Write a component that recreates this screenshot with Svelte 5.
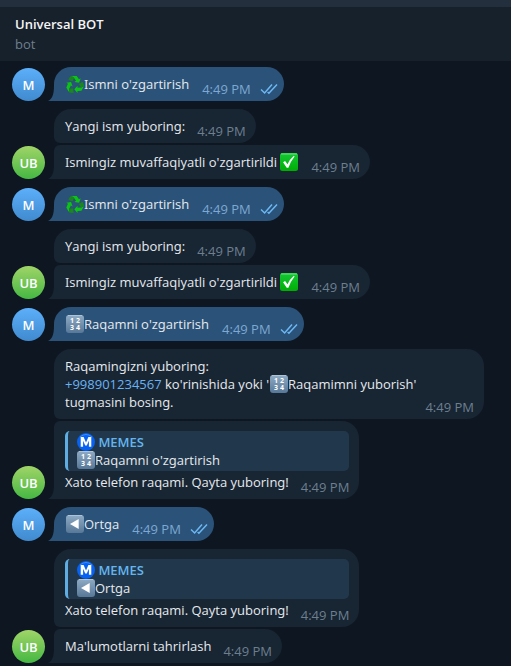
<script>
  const groups = [
    { own: true, messages: [{ parts: [{ icon: 'recycle' }, "Ismni o'zgartirish"] }] },
    {
      own: false,
      messages: [
        { parts: ['Yangi ism yuboring:'] },
        { parts: ["Ismingiz muvaffaqiyatli o'zgartirildi ", { icon: 'check' }] }
      ]
    },
    { own: true, messages: [{ parts: [{ icon: 'recycle' }, "Ismni o'zgartirish"] }] },
    {
      own: false,
      messages: [
        { parts: ['Yangi ism yuboring:'] },
        { parts: ["Ismingiz muvaffaqiyatli o'zgartirildi ", { icon: 'check' }] }
      ]
    },
    { own: true, messages: [{ parts: [{ icon: 'numbers' }, "Raqamni o'zgartirish"] }] },
    {
      own: false,
      messages: [
        {
          parts: [
            'Raqamingizni yuboring:',
            { br: true },
            { link: '+998901234567' },
            " ko'rinishida yoki '",
            { icon: 'numbers' },
            "Raqamimni yuborish' ",
            'tugmasini bosing.'
          ]
        },
        {
          reply: [{ icon: 'numbers' }, "Raqamni o'zgartirish"],
          parts: ['Xato telefon raqami. Qayta yuboring!']
        }
      ]
    },
    { own: true, messages: [{ parts: [{ icon: 'back' }, 'Ortga'] }] },
    {
      own: false,
      messages: [
        {
          reply: [{ icon: 'back' }, 'Ortga'],
          parts: ['Xato telefon raqami. Qayta yuboring!']
        },
        { parts: ["Ma'lumotlarni tahrirlash"] }
      ]
    }
  ];
  const time = '4:49 PM';
</script>

<svg class="defs" width="0" height="0" aria-hidden="true">
  <defs>
    <linearGradient id="key" x1="0" y1="0" x2="0" y2="1">
      <stop offset="0" stop-color="#8fabc4" />
      <stop offset="1" stop-color="#587898" />
    </linearGradient>
    <linearGradient id="leaf" x1="0" y1="0" x2="0" y2="1">
      <stop offset="0" stop-color="#14c936" />
      <stop offset="1" stop-color="#00ad05" />
    </linearGradient>
  </defs>
</svg>

{#snippet emoji(name)}
  <svg class="emoji" viewBox="0 0 19 18" aria-hidden="true">
    {#if name === 'recycle'}
      <g transform="translate(0.3 -0.6) scale(1.12)">
        {#each [0, 120, 240] as turn}
          <g transform="rotate({turn} 8.5 9.2)">
            <path d="M5.6 1.4 H10.2 L12.2 4.3 L13.8 3.5 L12.3 7.5 L8.1 6.7 L9.6 5.7 L7.7 2.9 Z" fill="#0cc414" />
            <path d="M5.6 1.4 L8 3.2 L6.2 6.3 L2.7 4.6 L4.3 2.1 Q4.8 1.4 5.6 1.4 Z" fill="#1a861e" />
          </g>
        {/each}
      </g>
    {:else if name === 'check'}
      <rect width="18" height="18" rx="2.5" fill="url(#leaf)" />
      <path d="M1 1 H17" stroke="#6be17c" stroke-width="1" />
      <path d="M3.1 9.3 L5.1 8 L7.5 11.2 Q9.9 6 13.9 2.7 L14.6 3.5 Q10.7 8.2 8.4 14.8 H6.7 Z" fill="#fff" />
    {:else if name === 'numbers'}
      <rect x="1" width="18" height="18" rx="3" fill="url(#key)" />
      <path d="M3 0.5 H17" stroke="#adc3d6" stroke-width="1" />
      <g class="digits">
        <text x="5" y="8">1</text>
        <text x="11" y="8">2</text>
        <text x="5" y="15">3</text>
        <text x="11" y="15">4</text>
      </g>
    {:else if name === 'back'}
      <rect x="1" width="18" height="18" rx="3" fill="url(#key)" />
      <path d="M3 0.5 H17" stroke="#adc3d6" stroke-width="1" />
      <path d="M13.7 4 V14 L5 9 Z" fill="#fff" />
    {:else if name === 'metro'}
      <circle cx="10" cy="9" r="9" fill="#0562f2" />
      <path d="M4 4 Q10 -1 16 4" stroke="#3c8cff" fill="none" />
      <path d="M4.7 13.8 V4 H7.6 L10 9.4 L12.4 4 H15.3 V13.8 H12.9 V7.8 L10.8 12.4 H9.2 L7.1 7.8 V13.8 Z" fill="#fff" />
    {/if}
  </svg>
{/snippet}

{#snippet content(parts)}
  {#each parts as part}{#if typeof part === 'string'}{part}{:else if part.icon}{@render emoji(part.icon)}{:else if part.link}<a href="tel:{part.link}">{part.link}</a>{:else}<br />{/if}{/each}
{/snippet}

<div class="chat">
  <header>
    <h1>Universal BOT</h1>
    <p>bot</p>
  </header>

  <main>
    {#each groups as group}
      <section class="group" class:own={group.own}>
        <div class="avatar">{group.own ? 'M' : 'UB'}</div>
        <div class="stack">
          {#each group.messages as message}
            <article class="bubble">
              {#if message.reply}
                <blockquote>
                  <strong>{@render emoji('metro')} MEMES</strong>
                  <div>{@render content(message.reply)}</div>
                </blockquote>
              {/if}
              <div class="text">
                {@render content(message.parts)}<span class="meta">
                  <time>{time}</time>
                  {#if group.own}
                    <svg class="ticks" viewBox="0 0 18 12" aria-label="Read">
                      <path d="M1 6.5 L4.6 10 L12 1.5 M7.6 9 L8.9 10.2 L17 1.5" />
                    </svg>
                  {/if}
                </span>
              </div>
              <svg class="tail" viewBox="0 0 6 16" aria-hidden="true">
                <path d="M6 0 V16 H0 C4 14 6 10 6 0 Z" />
              </svg>
            </article>
          {/each}
        </div>
      </section>
    {/each}
  </main>
</div>

<style>
  :global(body) {
    margin: 0;
    background: #0e1621;
  }
  .defs {
    position: absolute;
  }
  .chat {
    font: 13px/18px 'Open Sans', 'Noto Sans', sans-serif;
    font-feature-settings: 'ss01', 'salt';
    color: #e6eaee;
  }
  header {
    padding: 7px 15px 7px;
    border-top: 7px solid #242f3d;
    background: #17212b;
  }
  h1,
  header p {
    margin: 0;
    font-size: 13px;
    line-height: 20px;
  }
  h1 {
    font-weight: 600;
    color: #f5f5f5;
  }
  header p {
    color: #6d7f8f;
  }
  main {
    display: flex;
    flex-direction: column;
    gap: 8px;
    padding: 6px 12px 3px;
  }
  .group {
    display: flex;
    align-items: flex-end;
    gap: 9px;
    --bubble: #182533;
    --meta: #6d7f8f;
  }
  .own {
    --bubble: #2b5278;
    --meta: #7da8d3;
  }
  .avatar {
    flex: none;
    width: 33px;
    height: 33px;
    border-radius: 50%;
    background: linear-gradient(#a0d468, #45b843);
    color: #fff;
    font-weight: 600;
    line-height: 34px;
    text-align: center;
  }
  .own .avatar {
    background: linear-gradient(#5caffa, #408acf);
  }
  .stack {
    display: flex;
    flex-direction: column;
    align-items: flex-start;
    gap: 2px;
    min-width: 0;
  }
  .bubble {
    position: relative;
    box-sizing: border-box;
    max-width: 430px;
    padding: 8px 10px 8px 11px;
    border-radius: 17px 17px 17px 6px;
    background: var(--bubble);
  }
  .bubble:last-child {
    border-radius: 6px 17px 17px 0;
  }
  .bubble:first-child:last-child {
    border-radius: 17px 17px 17px 0;
  }
  .own .bubble {
    padding-right: 6px;
  }
  .tail {
    display: none;
    position: absolute;
    left: -6px;
    bottom: 0;
    width: 6px;
    height: 16px;
    fill: var(--bubble);
  }
  .bubble:last-child .tail {
    display: block;
  }
  blockquote {
    margin: 2px 0;
    padding: 2px 8px;
    border-left: 3px solid #5eaee4;
    border-radius: 5px;
    background: #21384c;
  }
  strong {
    display: block;
    font-weight: 600;
    color: #64b5ef;
  }
  a {
    color: #6ab3f3;
    text-decoration: none;
  }
  .emoji {
    width: 19px;
    height: 18px;
    vertical-align: top;
  }
  .digits {
    font: 700 7px 'Noto Sans', sans-serif;
    fill: #fff;
  }
  .meta {
    float: right;
    display: flex;
    align-items: center;
    gap: 9px;
    margin: 5px 0 -5px 12px;
    color: var(--meta);
    white-space: nowrap;
  }
  .own .meta {
    margin-left: 13px;
  }
  .ticks {
    width: 18px;
    height: 12px;
    fill: none;
    stroke: #6cb8f5;
    stroke-width: 1.5;
  }
</style>
